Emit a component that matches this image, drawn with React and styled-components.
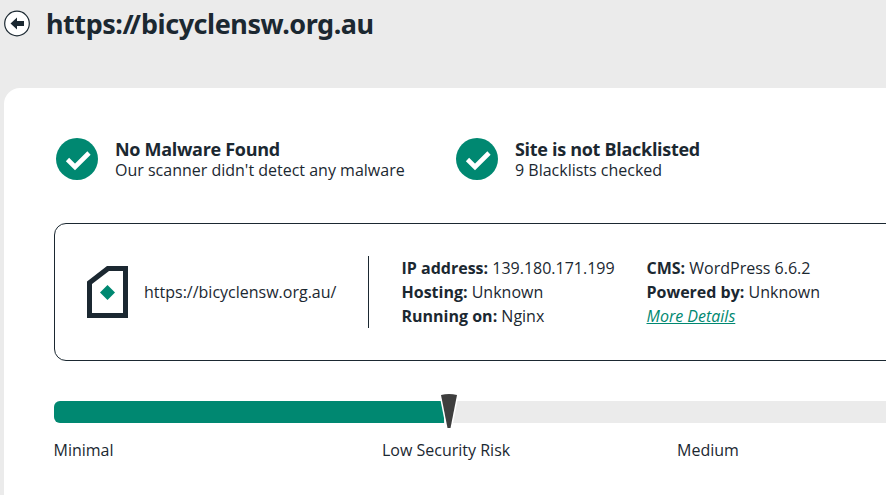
import React from "react";
import styled, { createGlobalStyle } from "styled-components";

const GlobalStyle = createGlobalStyle`
  html, body {
    margin: 0;
    height: 100%;
    overflow: hidden;
    background: #ebebeb;
  }
  body {
    font-family: "Open Sans", "Noto Sans", sans-serif;
    color: #1b2831;
  }
`;

const checks = [
  { title: "No Malware Found", text: "Our scanner didn't detect any malware" },
  { title: "Site is not Blacklisted", text: "9 Blacklists checked" },
];

const CheckIcon = () => (
  <svg width="42" height="42" viewBox="0 0 42 42">
    <circle cx="21" cy="21" r="21" fill="#008871" />
    <path d="M11.5 21.5l7.5 7.5 14-14" fill="none" stroke="#fff" strokeWidth="4.6" />
  </svg>
);

const BackIcon = () => (
  <svg width="26" height="27" viewBox="0 0 26 27">
    <circle cx="13" cy="13.5" r="12.3" fill="#fff" stroke="#1b2831" strokeWidth="1.2" />
    <path d="M6.5 13.5l6.5-6v3.6h7v4.8h-7v3.6z" fill="#1b2831" />
  </svg>
);

const SiteIcon = () => (
  <svg width="41" height="52" viewBox="0 0 41 52">
    <path d="M0 52V15.5L20 0H41V52zM5 47H36V5H22L5 18z" fill="#1b2831" fillRule="evenodd" />
    <path d="M20.5 19l7.5 7.5-7.5 7.5-7.5-7.5z" fill="#008871" />
  </svg>
);

const App = () => {
  return (
    <>
      <GlobalStyle />
      <Page>
        <Header>
          <BackButton href="#">
            <BackIcon />
          </BackButton>
          <Title>
            https:<Slashes>//</Slashes>bicyclensw.org.au
          </Title>
        </Header>
        <Card>
          <Checks>
            {checks.map((c) => (
              <Check key={c.title}>
                <CheckIcon />
                <div>
                  <CheckTitle>{c.title}</CheckTitle>
                  <CheckText>{c.text}</CheckText>
                </div>
              </Check>
            ))}
          </Checks>
          <InfoBox>
            <SiteCol>
              <SiteIcon />
              <SiteUrl>https://bicyclensw.org.au/</SiteUrl>
            </SiteCol>
            <Divider />
            <InfoCol>
              <p><b>IP address:</b> 139.180.171.199</p>
              <p><b>Hosting:</b> Unknown</p>
              <p><b>Running on:</b> Nginx</p>
            </InfoCol>
            <InfoCol>
              <p><b>CMS:</b> WordPress 6.6.2</p>
              <p><b>Powered by:</b> Unknown</p>
              <MoreLink href="#">More Details</MoreLink>
            </InfoCol>
          </InfoBox>
          <Meter>
            <MeterFill />
            <Needle width="20" height="37" viewBox="0 0 20 37">
              <path
                d="M2 2Q10 0 18 2L11.5 35h-3z"
                fill="#3e3e3e"
                stroke="#fff"
                strokeWidth="3"
                paintOrder="stroke"
              />
            </Needle>
          </Meter>
          <Labels>
            <Label $width="328.5px">Minimal</Label>
            <Label $width="295px">Low Security Risk</Label>
            <Label>Medium</Label>
          </Labels>
        </Card>
      </Page>
    </>
  );
};

const Page = styled.div`
  width: 886px;
  height: 495px;
  overflow: hidden;
`;

const Header = styled.div`
  display: flex;
  align-items: center;
  height: 88px;
  padding: 0 0 40px 4px;
  box-sizing: border-box;
`;

const BackButton = styled.a`
  display: flex;
  margin-right: 16px;
  margin-top: -2px;
`;

const Title = styled.h1`
  margin: 0;
  font-family: "Noto Sans", sans-serif;
  font-size: 27px;
  font-weight: 700;
  letter-spacing: -0.45px;
  line-height: 50px;
`;

const Slashes = styled.span`
  letter-spacing: -4px;
  margin-right: 4px;
`;

const Card = styled.div`
  margin-left: 4px;
  width: 1000px;
  height: 420px;
  padding: 50px 0 0 50px;
  box-sizing: border-box;
  background: #fff;
  border-radius: 16px 0 0 0;
`;

const Checks = styled.div`
  display: flex;
  margin-left: 2px;
`;

const Check = styled.div`
  display: flex;
  align-items: center;
  gap: 17px;
  width: 400px;
`;

const CheckTitle = styled.div`
  font-size: 18px;
  font-weight: 700;
  letter-spacing: -0.3px;
  line-height: 22px;
`;

const CheckText = styled.div`
  font-size: 16px;
  line-height: 20px;
`;

const InfoBox = styled.div`
  display: flex;
  align-items: center;
  width: 900px;
  height: 138px;
  margin-top: 43px;
  box-sizing: border-box;
  border: 1px solid #1b2831;
  border-radius: 12px;
  padding-left: 32px;
  font-size: 16px;
`;

const SiteCol = styled.div`
  display: flex;
  align-items: center;
  gap: 16px;
  width: 281px;
`;

const SiteUrl = styled.span`
  line-height: 24px;
`;

const Divider = styled.div`
  width: 1px;
  height: 72px;
  background: #1b2831;
  margin-right: 32.5px;
`;

const InfoCol = styled.div`
  width: 245px;
  line-height: 24px;
  p {
    margin: 0;
  }
`;

const MoreLink = styled.a`
  color: #008871;
  font-style: italic;
  text-decoration: underline;
`;

const Meter = styled.div`
  position: relative;
  width: 900px;
  height: 22px;
  margin-top: 40px;
  background: #ebebeb;
  border-radius: 6px 0 0 6px;
`;

const MeterFill = styled.div`
  width: 390px;
  height: 100%;
  background: #008871;
  border-radius: 6px 0 0 6px;
`;

const Needle = styled.svg`
  position: absolute;
  left: 385px;
  top: -8px;
`;

const Labels = styled.div`
  display: flex;
  margin-top: 16px;
  margin-left: -0.5px;
  font-size: 16px;
  line-height: 22px;
`;

const Label = styled.div`
  width: ${({ $width }) => $width || "auto"};
`;

export default App;
